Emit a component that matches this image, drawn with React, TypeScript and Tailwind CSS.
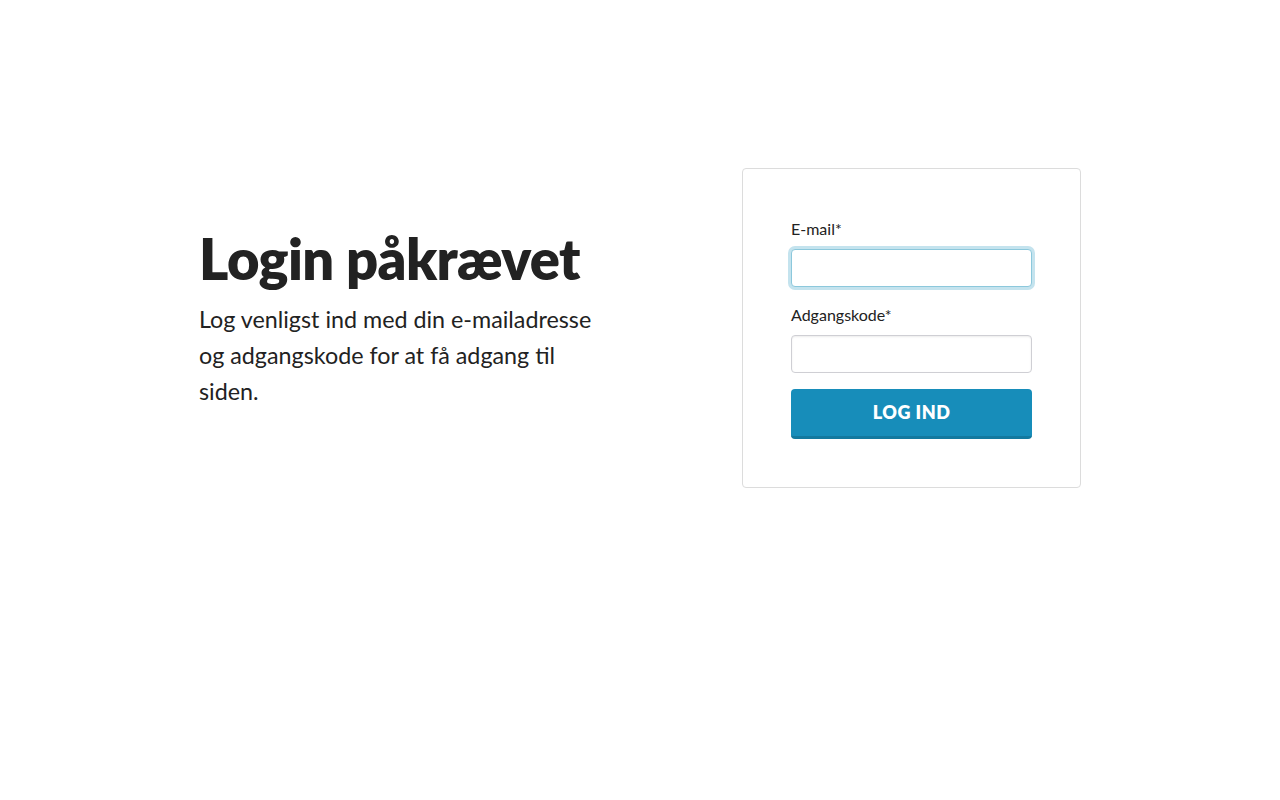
export default function App() {
  return (
    <div
      className="min-h-screen bg-white text-[#222222]"
      style={{ fontFamily: '"Lato", "Noto Sans", sans-serif' }}
    >
      <main className="mx-auto w-[882px] pt-[168px] flex items-center justify-between">
        {/* Intro */}
        <div className="w-[404px] -mt-[22px]">
          <h1 className="text-[56px] leading-[1.2] font-extrabold tracking-[-0.6px] mb-[9px]">
            Login påkrævet
          </h1>
          <p className="text-[23.3px] leading-[36px]">
            Log venligst ind med din e-mailadresse og adgangskode for at få adgang til siden.
          </p>
        </div>

        {/* Login card */}
        <form
          className="w-[339px] border border-[#dcdcdc] rounded-[4px] p-[48px] flex flex-col"
          onSubmit={(e) => e.preventDefault()}
        >
          <label className="text-[16px] leading-[24px] mb-[8px]">E-mail*</label>
          <input
            type="email"
            className="h-[38px] rounded-[4px] border border-[#8cc8dc] outline-none ring-[3px] ring-[#c4e3ee] bg-white px-2"
          />

          <label className="text-[16px] leading-[24px] mt-[16px] mb-[8px]">Adgangskode*</label>
          <input
            type="password"
            className="h-[38px] rounded-[4px] border border-[#cfcfd4] outline-none bg-white px-2 shadow-[inset_0_1px_2px_rgba(0,0,0,0.08)]"
          />

          <button
            type="submit"
            className="mt-[16px] h-[50px] rounded-[4px] bg-[#178dba] border-b-[3px] border-[#13799f] text-white font-extrabold text-[18px] tracking-[0.5px] uppercase"
          >
            Log ind
          </button>
        </form>
      </main>
    </div>
  );
}
